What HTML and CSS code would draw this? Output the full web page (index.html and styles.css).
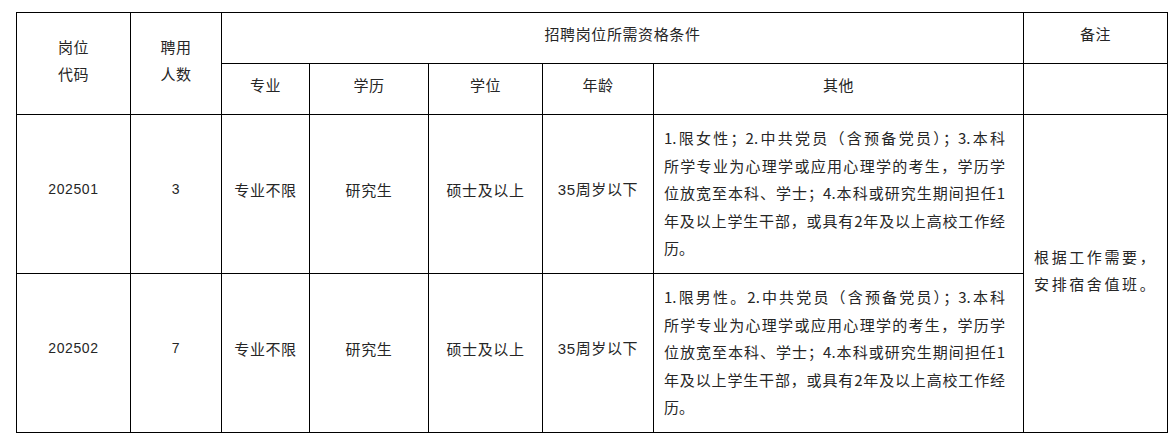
FILE: index.html
```html
<!DOCTYPE html>
<html lang="zh-CN">
<head>
<meta charset="utf-8">
<title>招聘岗位</title>
<link rel="stylesheet" href="styles.css">
</head>
<body>
<table class="jobs">
  <colgroup>
    <col class="c-code">
    <col class="c-num">
    <col class="c-major">
    <col class="c-edu">
    <col class="c-degree">
    <col class="c-age">
    <col class="c-other">
    <col class="c-note">
  </colgroup>
  <thead>
    <tr class="h1">
      <th rowspan="2" class="two">岗位<br>代码</th>
      <th rowspan="2" class="two">聘用<br>人数</th>
      <th colspan="5">招聘岗位所需资格条件</th>
      <th>备注</th>
    </tr>
    <tr class="h2">
      <th>专业</th>
      <th>学历</th>
      <th>学位</th>
      <th>年龄</th>
      <th>其他</th>
      <th></th>
    </tr>
  </thead>
  <tbody>
    <tr class="row">
      <td class="latin">202501</td>
      <td class="latin">3</td>
      <td>专业不限</td>
      <td>研究生</td>
      <td>硕士及以上</td>
      <td class="age">35周岁以下</td>
      <td class="other">
        <span class="ln full">1.限女性；2.中共党员（含预备党员）；3.本科</span>
        <span class="ln full">所学专业为心理学或应用心理学的考生，学历学</span>
        <span class="ln full">位放宽至本科、学士；4.本科或研究生期间担任1</span>
        <span class="ln full">年及以上学生干部，或具有2年及以上高校工作经</span>
        <span class="ln">历。</span>
      </td>
      <td rowspan="2" class="note">根据工作需要，<br>安排宿舍值班。</td>
    </tr>
    <tr class="row">
      <td class="latin">202502</td>
      <td class="latin">7</td>
      <td>专业不限</td>
      <td>研究生</td>
      <td>硕士及以上</td>
      <td class="age">35周岁以下</td>
      <td class="other">
        <span class="ln full">1.限男性。2.中共党员（含预备党员）；3.本科</span>
        <span class="ln full">所学专业为心理学或应用心理学的考生，学历学</span>
        <span class="ln full">位放宽至本科、学士；4.本科或研究生期间担任1</span>
        <span class="ln full">年及以上学生干部，或具有2年及以上高校工作经</span>
        <span class="ln">历。</span>
      </td>
    </tr>
  </tbody>
</table>
</body>
</html>
```
FILE: styles.css
```css
html, body {
  margin: 0;
  padding: 0;
  background: #ffffff;
}

body {
  padding: 12px 0 0 16px;
  font-family: "Noto Sans CJK SC", "Noto Sans", sans-serif;
  color: #262626;
}

.jobs {
  border-collapse: collapse;
  table-layout: fixed;
  width: 1151px;
  font-size: 15px;
  letter-spacing: 0.6px;
}

.c-code { width: 114px; }
.c-num { width: 91px; }
.c-major { width: 88px; }
.c-edu { width: 119px; }
.c-degree { width: 114px; }
.c-age { width: 111px; }
.c-other { width: 370px; }
.c-note { width: 144px; }

.jobs th,
.jobs td {
  border: 1px solid #000;
  padding: 0 0 10px 0;
  text-align: center;
  vertical-align: middle;
  font-weight: normal;
  line-height: 27px;
}

.h1 { height: 51px; }
.h2 { height: 51px; }
.row { height: 159px; }

.jobs th.two {
  padding-bottom: 8px;
}

.latin {
  font-family: "Liberation Sans", "Noto Sans CJK SC", sans-serif;
  font-size: 14px;
}

.age {
  font-family: "Liberation Sans", "Noto Sans CJK SC", sans-serif;
}

.jobs td.other {
  text-align: left;
  padding: 0 18px 2px 10px;
  line-height: 27.5px;
  letter-spacing: 0;
}

.ln {
  display: block;
  text-align: justify;
}

.ln.full {
  text-align-last: justify;
}

.jobs td.note {
  text-align: left;
  padding: 0 4px 8px 10px;
  letter-spacing: 2.6px;
}
```
